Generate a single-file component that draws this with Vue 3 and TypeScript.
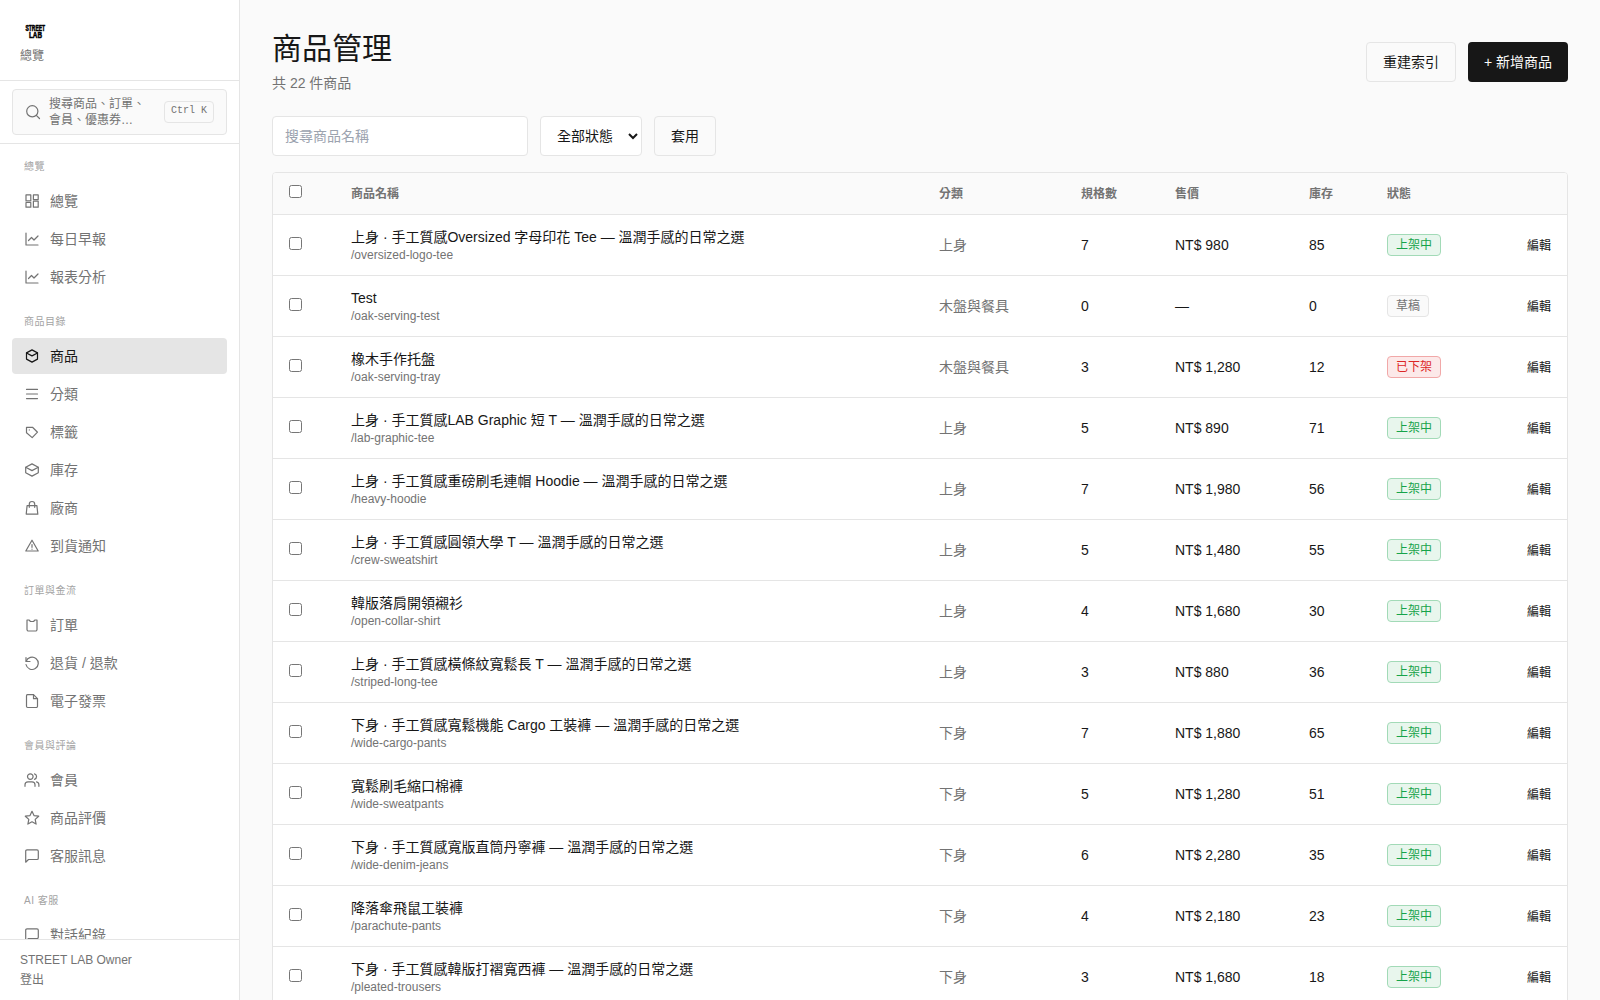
<script setup lang="ts">
interface NavItem {
  label: string
  icon: string
  active?: boolean
}
interface NavGroup {
  title: string
  items: NavItem[]
}
type Status = 'live' | 'draft' | 'off'
interface Product {
  name: string
  slug: string
  category: string
  variants: number
  price: string
  stock: number
  status: Status
}

const icons: Record<string, string[]> = {
  grid: ['M2 1.900h4.800v6H2z', 'M2 9.500h4.800v4.700H2z', 'M9.400 1.900h4.800v4.700H9.400z', 'M9.400 8.200h4.800v6H9.400z'],
  chart: ['M2 2v12h12', 'M4.500 9.500l3-3 2.500 2.500L14 5'],
  box: ['M8 1.900l5.500 3v6.200L8 14.100l-5.500-3V4.900z', 'M2.500 5L8 7.900l5.500-2.900'],
  list: ['M2.500 3.400h11M2.500 8h11M2.500 12.600h11'],
  tag: ['M2.500 3.300h6l5 4.900-5.300 5.400-5.700-4.800z', 'M5.300 5.900h.01'],
  cube: ['M8 1.900l6.300 3.300v5.600L8 14.100l-6.300-3.300V5.200z', 'M1.700 5.300L8 8.600l6.300-3.300'],
  bag: ['M3.100 5.600h9.800l.9 8.500H2.200z', 'M5.300 7.300V4.200a2.700 2.700 0 0 1 5.400 0v3.100'],
  alert: ['M8 2.200L14.200 13H1.800z', 'M8 6.500v2.800M8 11v.2'],
  order: ['M3 3h2l1.500 1.500h3L11 3h2v9.500a1.500 1.500 0 0 1-1.500 1.500h-7A1.500 1.500 0 0 1 3 12.500z'],
  refund: ['M2 2.500v4h4', 'M2.200 6.300A6.200 6.200 0 1 1 2 9.500'],
  file: ['M9.500 1.700h-6A1.200 1.200 0 0 0 2.500 3v10.300A1.200 1.200 0 0 0 3.700 14.500h8.600a1.200 1.200 0 0 0 1.200-1.200V5.700z', 'M9.500 1.700v4h4'],
  users: ['M1 14.300v-1.500a3 3 0 0 1 3-3h4a3 3 0 0 1 3 3v1.500', 'M6.300 1.800a2.800 2.800 0 1 1 0 5.600 2.800 2.800 0 0 1 0-5.600z', 'M10.500 1.900a2.800 2.800 0 0 1 0 5.400', 'M12.500 9.900a3 3 0 0 1 2.400 2.900v1.500'],
  star: ['M8 1.300l2 4.300 4.700.6-3.500 3.200.9 4.700L8 11.800l-4.100 2.300.9-4.700L1.300 6.200 6 5.600z'],
  chat: ['M14.300 10.200a1.300 1.300 0 0 1-1.300 1.300H4.500L1.700 14.200V3.200A1.300 1.300 0 0 1 3 1.900h10a1.300 1.300 0 0 1 1.300 1.300z'],
}

const groups: NavGroup[] = [
  {
    title: '總覽',
    items: [
      { label: '總覽', icon: 'grid' },
      { label: '每日早報', icon: 'chart' },
      { label: '報表分析', icon: 'chart' },
    ],
  },
  {
    title: '商品目錄',
    items: [
      { label: '商品', icon: 'box', active: true },
      { label: '分類', icon: 'list' },
      { label: '標籤', icon: 'tag' },
      { label: '庫存', icon: 'cube' },
      { label: '廠商', icon: 'bag' },
      { label: '到貨通知', icon: 'alert' },
    ],
  },
  {
    title: '訂單與金流',
    items: [
      { label: '訂單', icon: 'order' },
      { label: '退貨 / 退款', icon: 'refund' },
      { label: '電子發票', icon: 'file' },
    ],
  },
  {
    title: '會員與評論',
    items: [
      { label: '會員', icon: 'users' },
      { label: '商品評價', icon: 'star' },
      { label: '客服訊息', icon: 'chat' },
    ],
  },
  { title: 'AI 客服', items: [{ label: '對話紀錄', icon: 'chat' }] },
]

const statusText: Record<Status, string> = { live: '上架中', draft: '草稿', off: '已下架' }

const products: Product[] = [
  { name: '上身 · 手工質感Oversized 字母印花 Tee — 溫潤手感的日常之選', slug: '/oversized-logo-tee', category: '上身', variants: 7, price: 'NT$ 980', stock: 85, status: 'live' },
  { name: 'Test', slug: '/oak-serving-test', category: '木盤與餐具', variants: 0, price: '—', stock: 0, status: 'draft' },
  { name: '橡木手作托盤', slug: '/oak-serving-tray', category: '木盤與餐具', variants: 3, price: 'NT$ 1,280', stock: 12, status: 'off' },
  { name: '上身 · 手工質感LAB Graphic 短 T — 溫潤手感的日常之選', slug: '/lab-graphic-tee', category: '上身', variants: 5, price: 'NT$ 890', stock: 71, status: 'live' },
  { name: '上身 · 手工質感重磅刷毛連帽 Hoodie — 溫潤手感的日常之選', slug: '/heavy-hoodie', category: '上身', variants: 7, price: 'NT$ 1,980', stock: 56, status: 'live' },
  { name: '上身 · 手工質感圓領大學 T — 溫潤手感的日常之選', slug: '/crew-sweatshirt', category: '上身', variants: 5, price: 'NT$ 1,480', stock: 55, status: 'live' },
  { name: '韓版落肩開領襯衫', slug: '/open-collar-shirt', category: '上身', variants: 4, price: 'NT$ 1,680', stock: 30, status: 'live' },
  { name: '上身 · 手工質感橫條紋寬鬆長 T — 溫潤手感的日常之選', slug: '/striped-long-tee', category: '上身', variants: 3, price: 'NT$ 880', stock: 36, status: 'live' },
  { name: '下身 · 手工質感寬鬆機能 Cargo 工裝褲 — 溫潤手感的日常之選', slug: '/wide-cargo-pants', category: '下身', variants: 7, price: 'NT$ 1,880', stock: 65, status: 'live' },
  { name: '寬鬆刷毛縮口棉褲', slug: '/wide-sweatpants', category: '下身', variants: 5, price: 'NT$ 1,280', stock: 51, status: 'live' },
  { name: '下身 · 手工質感寬版直筒丹寧褲 — 溫潤手感的日常之選', slug: '/wide-denim-jeans', category: '下身', variants: 6, price: 'NT$ 2,280', stock: 35, status: 'live' },
  { name: '降落傘飛鼠工裝褲', slug: '/parachute-pants', category: '下身', variants: 4, price: 'NT$ 2,180', stock: 23, status: 'live' },
  { name: '下身 · 手工質感韓版打褶寬西褲 — 溫潤手感的日常之選', slug: '/pleated-trousers', category: '下身', variants: 3, price: 'NT$ 1,680', stock: 18, status: 'live' },
]
</script>

<template>
  <div class="app" lang="zh-TW">
    <aside class="sidebar">
      <header class="brand">
        <svg class="logo" width="30" height="22" viewBox="0 0 30 22">
          <text x="5.500" y="11" textLength="19.500" lengthAdjust="spacingAndGlyphs">STREET</text>
          <text x="9" y="18" textLength="13" lengthAdjust="spacingAndGlyphs">LAB</text>
        </svg>
        <span class="brand-sub">總覽</span>
      </header>
      <div class="search-wrap">
        <button class="search">
          <svg width="16" height="16" viewBox="0 0 16 16"><circle cx="7.300" cy="7.300" r="5.600" /><path d="M11.300 11.300l3.200 3.200" /></svg>
          <span class="search-text">搜尋商品、訂單、會員、優惠券…</span>
          <kbd>Ctrl K</kbd>
        </button>
      </div>
      <nav class="nav">
        <section v-for="g in groups" :key="g.title" class="group">
          <h2>{{ g.title }}</h2>
          <a v-for="i in g.items" :key="i.label" class="item" :class="{ active: i.active }">
            <svg width="16" height="16" viewBox="0 0 16 16">
              <path v-for="d in icons[i.icon]" :key="d" :d="d" />
            </svg>
            <span>{{ i.label }}</span>
          </a>
        </section>
      </nav>
      <footer class="account">
        <div>STREET LAB Owner</div>
        <div>登出</div>
      </footer>
    </aside>

    <main class="main">
      <div class="head">
        <div>
          <h1>商品管理</h1>
          <p>共 22 件商品</p>
        </div>
        <div class="actions">
          <button class="btn">重建索引</button>
          <button class="btn primary">+ 新增商品</button>
        </div>
      </div>
      <form class="filters" @submit.prevent>
        <input class="field" type="text" placeholder="搜尋商品名稱" />
        <select class="select"><option>全部狀態</option></select>
        <button class="btn">套用</button>
      </form>
      <div class="card">
        <table>
          <colgroup>
            <col class="c-check" /><col class="c-name" /><col class="c-cat" /><col class="c-var" />
            <col class="c-price" /><col class="c-stock" /><col class="c-status" /><col />
          </colgroup>
          <thead>
            <tr>
              <th><input type="checkbox" /></th>
              <th>商品名稱</th>
              <th>分類</th>
              <th>規格數</th>
              <th>售價</th>
              <th>庫存</th>
              <th>狀態</th>
              <th></th>
            </tr>
          </thead>
          <tbody>
            <tr v-for="p in products" :key="p.slug">
              <td><input type="checkbox" /></td>
              <td>
                <div class="name">{{ p.name }}</div>
                <div class="slug">{{ p.slug }}</div>
              </td>
              <td class="muted">{{ p.category }}</td>
              <td>{{ p.variants }}</td>
              <td>{{ p.price }}</td>
              <td>{{ p.stock }}</td>
              <td><span class="badge" :class="p.status">{{ statusText[p.status] }}</span></td>
              <td class="edit"><a>編輯</a></td>
            </tr>
          </tbody>
        </table>
      </div>
    </main>
  </div>
</template>

<style>
html,
body {
  margin: 0;
  height: 100%;
  overflow: hidden;
}
</style>

<style scoped>
* {
  box-sizing: border-box;
}
.app {
  display: flex;
  height: 100vh;
  overflow: hidden;
  background: #fafafa;
  color: #171717;
  font-family: 'Liberation Sans', 'Noto Sans CJK TC', sans-serif;
  font-size: 14px;
  line-height: 20px;
}
button,
input,
select {
  font: inherit;
  color: inherit;
}
.sidebar {
  display: flex;
  flex-direction: column;
  flex: none;
  width: 240px;
  height: 100vh;
  background: #fff;
  border-right: 1px solid #e5e5e5;
  color: #737373;
}
.sidebar svg {
  flex: none;
  fill: none;
  stroke: currentColor;
  stroke-width: 1.2;
  stroke-linecap: round;
  stroke-linejoin: round;
}
.brand {
  height: 81px;
  flex: none;
  padding: 20px 20px 0;
  border-bottom: 1px solid #e5e5e5;
}
.sidebar .logo {
  display: block;
  overflow: visible;
  fill: #000;
  stroke: #000;
  stroke-width: 0.6;
  font: 700 9px 'Liberation Sans', sans-serif;
}
.brand-sub {
  display: block;
  margin-top: 6px;
  font-size: 12px;
  line-height: 16px;
}
.search-wrap {
  flex: none;
  height: 63px;
  padding: 8px 12px;
  border-bottom: 1px solid #e5e5e5;
}
.search {
  display: flex;
  align-items: center;
  width: 100%;
  height: 46px;
  padding: 0 12px;
  gap: 8px;
  background: #fafafa;
  border: 1px solid #e5e5e5;
  border-radius: 4px;
  font-size: 12px;
  line-height: 16px;
  text-align: left;
}
.search-text {
  flex: 1;
}
kbd {
  flex: none;
  padding: 1px 6px 3px;
  border: 1px solid #e5e5e5;
  border-radius: 4px;
  font: 10px/16px 'Liberation Mono', monospace;
}
.nav {
  flex: 1;
  min-height: 0;
  overflow: hidden;
  padding: 12px 12px 0;
}
.group {
  display: flex;
  flex-direction: column;
  gap: 2px;
  margin-bottom: 16px;
}
.group h2 {
  margin: 0;
  padding: 3px 12px 0;
  font-size: 10px;
  line-height: 15px;
  height: 25px;
  font-weight: 400;
  letter-spacing: 0.5px;
  color: #a3a3a3;
}
.item {
  display: flex;
  align-items: center;
  gap: 10px;
  height: 36px;
  padding: 0 12px;
  border-radius: 4px;
}
.item.active {
  background: #e5e5e5;
  color: #171717;
}
.account {
  flex: none;
  height: 61px;
  padding: 10px 20px;
  border-top: 1px solid #e5e5e5;
  font-size: 12px;
}
.main {
  flex: 1;
  min-width: 0;
  padding: 30px 32px 0;
}
.head {
  display: flex;
  justify-content: space-between;
  align-items: center;
  height: 64px;
}
h1 {
  margin: 0;
  font-size: 30px;
  line-height: 36px;
  font-weight: 400;
}
.head p {
  margin: 6px 0 0;
  color: #737373;
}
.actions,
.filters {
  display: flex;
  gap: 12px;
}
.filters {
  margin: 22px 0 16px;
}
.btn {
  height: 40px;
  padding: 0 16px;
  background: #fafafa;
  border: 1px solid #e5e5e5;
  border-radius: 4px;
}
.btn.primary {
  background: #171717;
  border: none;
  color: #fafafa;
}
.field {
  width: 256px;
  height: 40px;
  padding: 0 12px;
  background: #fff;
  border: 1px solid #e5e5e5;
  border-radius: 4px;
}
.field::placeholder {
  color: #9ca3af;
}
.select {
  width: 102px;
  height: 40px;
  padding: 0 0 0 12px;
  background: #fff;
  border: 1px solid #e5e5e5;
  border-radius: 4px;
}
.card {
  background: #fff;
  border: 1px solid #e5e5e5;
  border-radius: 4px;
  overflow: hidden;
}
table {
  width: 100%;
  table-layout: fixed;
  border-collapse: collapse;
}
.c-check { width: 62px; }
.c-name { width: 588px; }
.c-cat { width: 142px; }
.c-var { width: 94px; }
.c-price { width: 134px; }
.c-stock { width: 78px; }
.c-status { width: 98px; }
th {
  height: 41px;
  padding: 2px 16px 0;
  background: #fafafa;
  color: #737373;
  font-size: 12px;
  font-weight: 700;
  text-align: left;
}
tr {
  border-bottom: 1px solid #e5e5e5;
}
td {
  height: 61px;
  padding: 0 16px;
}
input[type='checkbox'] {
  display: block;
  width: 13px;
  height: 13px;
  margin: 0 0 5px;
}
td input[type='checkbox'] {
  margin-bottom: 2px;
}
.slug {
  font-size: 12px;
  line-height: 16px;
  color: #737373;
}
.muted {
  color: #737373;
}
.badge {
  display: inline-block;
  padding: 2px 8px;
  border: 1px solid;
  border-radius: 4px;
  font-size: 12px;
  line-height: 16px;
}
.live {
  color: #16a34a;
  background: #e8f6ed;
  border-color: #a2dab7;
}
.draft {
  color: #737373;
  background: #fafafa;
  border-color: #e5e5e5;
}
.off {
  color: #dc2626;
  background: #fce9e9;
  border-color: #f1a8a8;
}
.edit {
  padding-top: 2px;
  text-align: right;
}
.edit a {
  font-size: 12px;
}
</style>
